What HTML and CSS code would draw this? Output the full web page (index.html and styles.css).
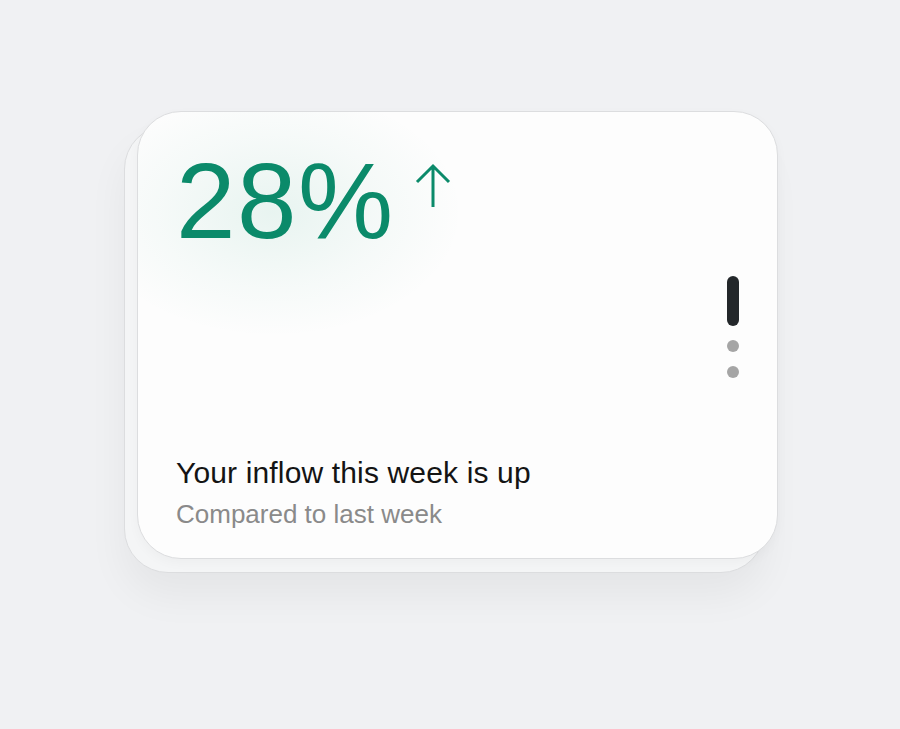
FILE: index.html
```html
<!DOCTYPE html>
<html lang="en">
<head>
<meta charset="utf-8">
<title>Inflow card</title>
<link rel="stylesheet" href="styles.css">
</head>
<body>
<main class="stage">
  <section class="card">
    <div class="card-main">
      <div class="stat">
        <span class="stat-value">28%</span>
        <svg class="stat-arrow" width="36" height="46" viewBox="0 0 36 46" aria-hidden="true">
          <path d="M18 44V3M2 19L18 3L34 19" fill="none" stroke="#0b8a6a" stroke-width="3" stroke-linecap="butt" stroke-linejoin="miter"/>
        </svg>
      </div>
      <div class="caption">
        <h2 class="caption-title">Your inflow this week is up</h2>
        <p class="caption-sub">Compared to last week</p>
      </div>
    </div>
    <div class="pager" aria-hidden="true">
      <span class="pager-active"></span>
      <span class="pager-dot"></span>
      <span class="pager-dot"></span>
    </div>
  </section>
</main>
</body>
</html>
```

FILE: styles.css
```css
html {
  background: #f0f1f3;
}

body {
  margin: 0;
  padding: 0;
  font-family: "Liberation Sans", Arial, sans-serif;
}

.stage {
  width: 900px;
  height: 729px;
  padding: 111px 0 0 137px;
  box-sizing: border-box;
}

.card {
  position: relative;
  width: 641px;
  height: 448px;
  box-sizing: border-box;
  border: 1px solid #dcdddf;
  border-radius: 44px;
  background:
    radial-gradient(ellipse 190px 125px at 135px 100px, rgba(20, 150, 110, 0.09), rgba(20, 150, 110, 0.03) 60%, rgba(20, 150, 110, 0) 100%),
    #fdfdfd;
  display: grid;
  grid-template-columns: 1fr auto;
  align-items: center;
  padding: 0 38px;
  box-shadow: 0 4px 12px rgba(0, 0, 0, 0.03);
}

.card::before {
  content: "";
  position: absolute;
  left: -14px;
  top: 13px;
  width: 641px;
  height: 448px;
  box-sizing: border-box;
  border: 1px solid #dcdddf;
  border-radius: 44px;
  background: #f4f5f6;
  z-index: -1;
  box-shadow: 0 22px 40px rgba(0, 0, 0, 0.05);
}

.card-main {
  height: 100%;
  display: flex;
  flex-direction: column;
  justify-content: space-between;
  padding: 36px 0 29px;
  box-sizing: border-box;
}

.stat {
  display: flex;
  align-items: flex-start;
  gap: 20px;
}

.stat-value {
  font-size: 107px;
  line-height: 1;
  letter-spacing: 1.5px;
  color: #0b8a6a;
  font-weight: 400;
}

.stat-value + .stat-arrow {
  margin-top: 15px;
}

.caption-title {
  margin: 0;
  font-size: 30px;
  font-weight: 400;
  line-height: 36px;
  letter-spacing: 0.15px;
  color: #141414;
}

.caption-sub {
  margin: 8px 0 0;
  font-size: 26px;
  line-height: 30px;
  letter-spacing: 0;
  color: #8a8a8a;
}

.pager {
  display: flex;
  flex-direction: column;
  align-items: center;
  gap: 14px;
  margin-top: -16px;
}

.pager-active {
  width: 12px;
  height: 50px;
  border-radius: 6px;
  background: #23272a;
}

.pager-dot {
  width: 12px;
  height: 12px;
  border-radius: 50%;
  background: #a5a5a5;
}
```
